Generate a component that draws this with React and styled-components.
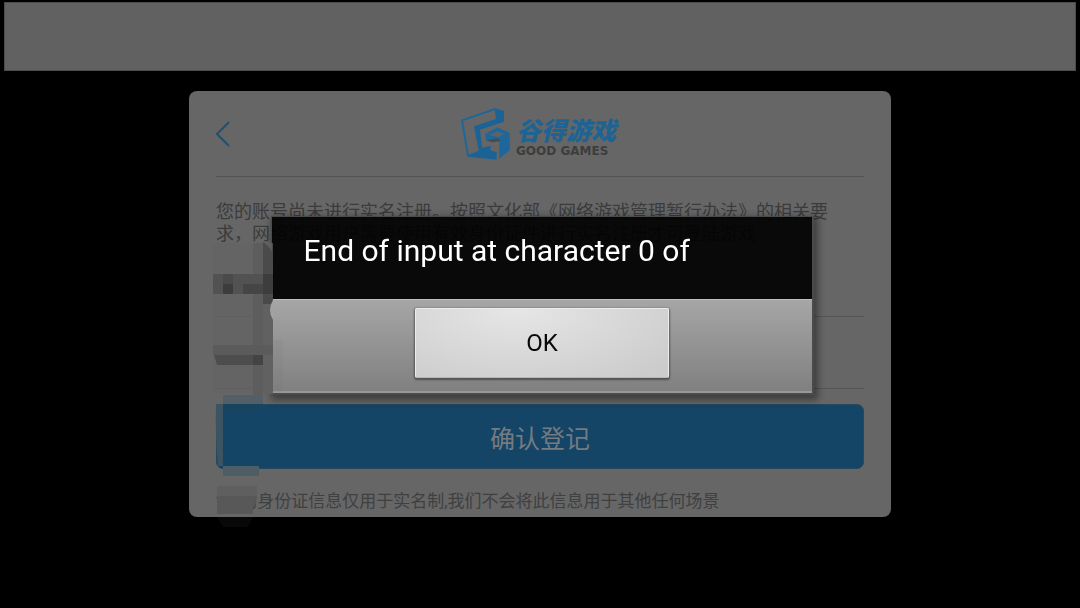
import React, { useState } from 'react'
import styled, { createGlobalStyle } from 'styled-components';


const GlobalStyle = createGlobalStyle`
  * {
    box-sizing: border-box;
  }

  body {
    margin: 0;
    background-color: #000000;
    font-family: Roboto, "Noto Sans CJK SC", sans-serif;
  }
`;

const Container = styled.div`
  display: flex;
  flex-direction: column;
  align-items: center;
  width: 100%;
  min-height: 100vh;
  padding: 2px 4px;
`;

const Banner = styled.div`
  width: 100%;
  height: 69px;
  background-color: #616161;
  border: 1px solid #4c4c4c;
`;

const Panel = styled.form`
  position: relative;
  display: flex;
  flex-direction: column;
  width: 65.5%;
  margin-top: 20px;
  padding: 0 27px 5px;
  background-color: #666666;
  border-radius: 8px;
`;

const Header = styled.header`
  display: grid;
  grid-template-columns: 40px 1fr 40px;
  align-items: center;
  height: 86px;
  border-bottom: 1px solid #545454;
`;

const BackButton = styled.button`
  display: flex;
  padding: 0;
  border: 0;
  background: none;
  color: #23506f;
`;

const Logo = styled.div`
  display: flex;
  justify-content: center;
  align-items: center;
  gap: 6px;
  padding-right: 4px;
`;

const LogoText = styled.div`
  display: flex;
  flex-direction: column;
  padding-top: 7px;
`;

const LogoName = styled.span`
  color: #1d6394;
  font-family: "Noto Sans CJK SC", sans-serif;
  font-size: 25px;
  font-weight: 900;
  font-style: italic;
  line-height: 28px;
`;

const LogoSub = styled.span`
  color: #3d3d3d;
  font-family: "DejaVu Sans", sans-serif;
  font-size: 12px;
  font-weight: bold;
  line-height: 16px;
`;

const Notice = styled.p`
  margin: 24px 0 0;
  color: #3b3b3b;
  font-size: 18px;
  line-height: 22px;
  white-space: nowrap;
`;

const Field = styled.input`
  width: 100%;
  height: 72px;
  padding: 0 72px;
  border: 0;
  border-bottom: 1px solid #545454;
  background: none;
  color: #3b3b3b;
  font-size: 18px;
  outline: none;
`;

const SubmitButton = styled.button`
  height: 65px;
  margin-top: 15px;
  border: 1px solid #27485d;
  border-radius: 7px;
  background-color: #144466;
  color: #747b81;
  font-family: inherit;
  font-size: 25px;
`;

const Footnote = styled.p`
  margin: 21px 0 0;
  color: #404040;
  font-size: 17px;
  line-height: 22px;
`;

const Smudge = styled.svg`
  position: absolute;
  left: 0;
  top: 139px;
  z-index: 3;
  pointer-events: none;
`;

const Overlay = styled.div`
  position: fixed;
  inset: 0;
  z-index: 2;
  display: flex;
  justify-content: center;
  align-items: center;
  padding: 2px 0 0 5px;
`;

const Dialog = styled.div`
  width: 50.6%;
  border: 1px solid #4b4b4b;
  border-right-width: 2px;
  border-bottom-width: 2px;
  box-shadow: 2px 3px 7px 2px rgba(0, 0, 0, 0.4);
`;

const Message = styled.p`
  margin: 0;
  height: 82px;
  padding: 14px 32px;
  background-color: rgba(0, 0, 0, 0.91);
  color: #ffffff;
  font-size: 30px;
  line-height: 40px;
  white-space: nowrap;
`;

const Actions = styled.div`
  display: flex;
  justify-content: center;
  height: 94px;
  padding-top: 8px;
  border-top: 1px solid #bdbdbd;
  border-bottom: 2px solid #989898;
  background: linear-gradient(#a6a6a6, #808080);
`;

const OkButton = styled.button`
  width: 47%;
  height: 70px;
  border: 1px solid #ececec;
  border-bottom-color: #b9b9b9;
  border-radius: 2px;
  background: radial-gradient(ellipse at 40% 0, #e6e6e6, #cccccc 90%);
  box-shadow: 0 1px 2px 1px rgba(0, 0, 0, 0.4);
  color: #0a0a0a;
  font-family: inherit;
  font-size: 24px;
`;

const LogoMark = () => (
  <svg width="50" height="54" viewBox="0 0 150 162" aria-hidden="true">
    <path d="M106 6 L6 40 L24 146 L58 134" fill="none" stroke="#1f6798" strokeWidth="6" />
    <path d="M104 3 L132 12 V44 L60 68 L66 122 L92 116 V130 L110 136 L110 158 L22 149 L56 132 L42 58 L108 36 Z" fill="#1b6396" />
    <path d="M76 80 L112 61 L149 78 V130 L118 155 V104 L96 106 L78 100 Z" fill="#1d679c" />
    <path d="M88 84 L112 72 L134 82 L112 91 Z" fill="#5b6468" />
    <path d="M80 100 L112 94 L122 100 L98 106 Z" fill="#444c50" />
  </svg>
);

const Blocks = () => (
  <Smudge width="110" height="300" viewBox="0 0 110 300" aria-hidden="true">
    <rect x="24" y="13" width="60" height="150" fill="#646464" opacity="0.7" />
    <rect x="64" y="13" width="10" height="152" fill="#5d5d5d" />
    <path d="M74 12 Q84 18 84 28 V74 H74 Z" fill="#4a4a4a" />
    <rect x="24" y="44" width="60" height="20" fill="#525252" />
    <rect x="34" y="44" width="10" height="10" fill="#4a4a4a" />
    <rect x="34" y="54" width="10" height="10" fill="#3c3c3c" />
    <rect x="54" y="54" width="30" height="10" fill="#454545" />
    <rect x="74" y="44" width="10" height="20" fill="#3d3d3d" />
    <rect x="74" y="74" width="10" height="90" fill="#616161" />
    <path d="M84 70 Q78 80 84 90 Z" fill="#a2a2a2" />
    <rect x="24" y="115" width="60" height="10" fill="#5b5b5b" />
    <path d="M25 125 H74 V135 H28 Z" fill="#4d4d4d" />
    <rect x="64" y="125" width="10" height="10" fill="#444444" />
    <rect x="84" y="110" width="10" height="52" fill="#7a7a7a" opacity="0.15" />
    <rect x="34" y="165" width="40" height="9" fill="#535f67" />
    <path d="M27 174 H34 V236 H29 Q26 205 27 174 Z" fill="#3c5361" />
    <rect x="34" y="174" width="40" height="8" fill="#184461" />
    <rect x="34" y="236" width="36" height="10" fill="#4e5c64" />
    <rect x="28" y="256" width="40" height="11" fill="#5f5f5f" />
    <path d="M28 266 H68 Q68 272 64 278 V284 H28 Z" fill="#585858" />
    <path d="M28 287 H64 L58 297 H34 Z" fill="#080808" />
  </Smudge>
);

function App() {

  const [open, setOpen] = useState(true);

  return (
    <Container>
      <GlobalStyle />
      <Banner />
      <Panel onSubmit={e => e.preventDefault()}>
        <Header>
          <BackButton type="button" aria-label="返回">
            <svg width="14" height="26" viewBox="0 0 14 26" fill="none" stroke="currentColor" strokeWidth="2">
              <path d="M13 1 L1 13 L13 25" />
            </svg>
          </BackButton>
          <Logo>
            <LogoMark />
            <LogoText>
              <LogoName>谷得游戏</LogoName>
              <LogoSub>GOOD GAMES</LogoSub>
            </LogoText>
          </Logo>
        </Header>
        <Notice>
          您的账号尚未进行实名注册。按照文化部《网络游戏管理暂行办法》的相关要<br />
          求，网络游戏用户需要使用有效身份证件进行实名注册才可登陆游戏
        </Notice>
        <Field type="text" aria-label="姓名" />
        <Field type="text" aria-label="身份证" />
        <SubmitButton type="submit">确认登记</SubmitButton>
        <Footnote>*您的身份证信息仅用于实名制,我们不会将此信息用于其他任何场景</Footnote>
        <Blocks />
      </Panel>
      {open && (
        <Overlay>
          <Dialog role="alertdialog" aria-labelledby="message">
            <Message id="message">End of input at character 0 of</Message>
            <Actions>
              <OkButton type="button" onClick={() => setOpen(false)}>OK</OkButton>
            </Actions>
          </Dialog>
        </Overlay>
      )}
    </Container>
  );
};
export default App;
